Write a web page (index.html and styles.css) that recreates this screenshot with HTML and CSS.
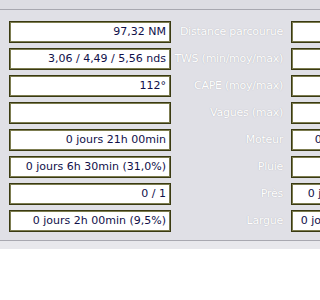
FILE: index.html
```html
<!DOCTYPE html>
<html lang="fr">
<head>
  <meta charset="UTF-8" />
  <title>Statistiques de navigation</title>
  <link rel="stylesheet" href="styles.css">
</head>
<body>

  <div class="panel">
    <div class="stats">
      <div class="field">97,32 NM</div>
      <div class="label">Distance parcourue</div>
      <div class="field"></div>

      <div class="field">3,06 / 4,49 / 5,56 nds</div>
      <div class="label">TWS (min/moy/max)</div>
      <div class="field"></div>

      <div class="field">112°</div>
      <div class="label">CAPE (moy/max)</div>
      <div class="field"></div>

      <div class="field"></div>
      <div class="label">Vagues (max)</div>
      <div class="field"></div>

      <div class="field">0 jours 21h 00min</div>
      <div class="label">Moteur</div>
      <div class="field">0 jours 0h 30min (2,4%)</div>

      <div class="field">0 jours 6h 30min (31,0%)</div>
      <div class="label">Pluie</div>
      <div class="field"></div>

      <div class="field">0 / 1</div>
      <div class="label">Près</div>
      <div class="field">0 jours 9h 00min (42,9%)</div>

      <div class="field">0 jours 2h 00min (9,5%)</div>
      <div class="label">Largue</div>
      <div class="field">0 jours 10h 00min (47,6%)</div>
    </div>
  </div>
  <div class="footer"></div>

</body>
</html>
```

FILE: styles.css
```css
* {
  box-sizing: border-box;
  margin: 0;
  padding: 0;
  font-family: 'DejaVu Sans', Verdana, sans-serif;
}

body {
  background: #fff;
  width: 320px;
  height: 300px;
  overflow: hidden;
}

/* Panneau principal */
.panel {
  background: #dddde3;
  padding-top: 9px;
  border-bottom: 1px solid #a8a8b0;
}

.stats {
  border-top: 1px solid #a8a8b0;
  background: #e0e0e6;
  display: grid;
  grid-template-columns: 162px 120px 162px;
  row-gap: 5px;
  padding: 11px 0 8px 9px;
  width: 460px;
}

.field {
  height: 22px;
  background: #fff;
  border: 1px solid #3a3a12;
  box-shadow: inset 0 0 0 1px #7c7c50;
  color: #10104a;
  font-size: 11px;
  line-height: 20px;
  text-align: right;
  padding: 0 4px;
  white-space: nowrap;
  overflow: hidden;
}

.label {
  color: #fff;
  font-size: 11px;
  letter-spacing: -0.25px;
  line-height: 22px;
  text-align: right;
  padding-right: 8px;
  white-space: nowrap;
  text-shadow: 0 0 1px #a4a4ac;
}

/* Bande sous le panneau */
.footer {
  height: 8px;
  background: #e8e8ec;
}
```
